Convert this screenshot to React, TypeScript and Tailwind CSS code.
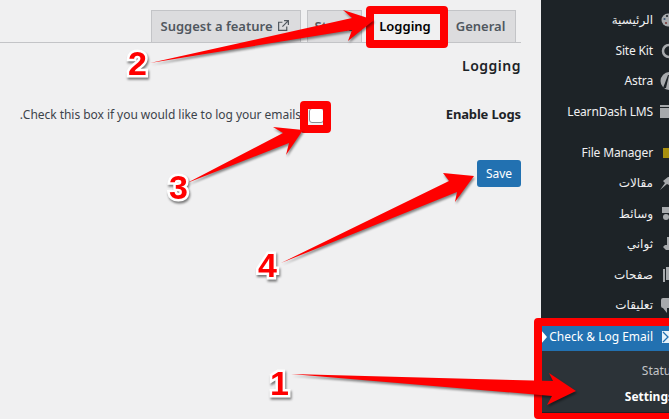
const font = "font-['Noto_Sans','DejaVu_Sans',sans-serif]"

const menu = [
  { label: 'الرئيسية', icon: <><circle cx="8" cy="10" r="6.5" fill="#a7aaad" /><circle cx="4.5" cy="9" r="1.1" fill="#3f5a78" /><circle cx="6" cy="13" r="1.1" fill="#7a3b3b" /><circle cx="7" cy="6" r="1.1" fill="#1d2327" /></> },
  { label: 'Site Kit', icon: <circle cx="9" cy="10" r="6" fill="none" stroke="#a7aaad" strokeWidth="2.5" /> },
  { label: 'Astra', icon: <><circle cx="9.5" cy="10" r="9" fill="#a7aaad" /><path d="M3 17 L8 4 L9 4 L6 17 Z" fill="#1d2327" /></> },
  { label: 'LearnDash LMS', icon: <><rect x="0" y="3" width="9" height="13" fill="#a7aaad" /><rect x="0" y="5" width="9" height="1" fill="#1d2327" /></> },
  { label: 'File Manager', icon: <path d="M3 5 H9 V15 H3 Z" fill="#a8900f" />, gap: true },
  { label: 'مقالات', icon: <path d="M0 17 L5 10 L3 8 L8 4 L9 4 L9 12 L7 11 Z" fill="#a7aaad" /> },
  { label: 'وسائط', icon: <><rect x="2" y="3" width="7" height="6" fill="#a7aaad" /><circle cx="6" cy="13" r="3" fill="#a7aaad" /></> },
  { label: 'ثواني', icon: <path d="M7 3 L9 3 L9 16 L6 16 L3 13 L5 11 L7 11 Z" fill="#a7aaad" /> },
  { label: 'صفحات', icon: <><rect x="3" y="4" width="2" height="13" fill="#a7aaad" /><rect x="6" y="2" width="3" height="13" fill="#a7aaad" /></> },
  { label: 'تعليقات', icon: <path d="M3 3 H9 V13 H7 V18 L3 13 Q1 13 1 11 V5 Q1 3 3 3 Z" fill="#a7aaad" /> },
]

function Sidebar() {
  return (
    <aside className="w-[128px] shrink-0 bg-[#1d2327] pt-[5px] h-full text-[#f0f0f1] text-[12px]">
      {menu.map(item => (
        <div key={item.label} className={`flex items-center gap-[7px] h-[30.5px] tracking-[-0.15px] ${item.gap ? 'mt-[10.5px]' : ''}`}>
          <svg width="9" height="20" viewBox="0 0 9 20" className="shrink-0">{item.icon}</svg>
          <span className="whitespace-nowrap">{item.label}</span>
        </div>
      ))}
      <div className="relative flex items-center gap-[7px] h-[26px] pb-[1px] bg-[#2271b1] text-white mt-[4px]">
        <svg width="9" height="20" viewBox="0 0 9 20" className="shrink-0">
          <rect x="2" y="4" width="10" height="12" fill="#e6f2fa" />
          <path d="M3 5 L8 10 L3 15" fill="none" stroke="#2271b1" strokeWidth="1.3" />
        </svg>
        <span className="whitespace-nowrap">Check &amp; Log Email</span>
        <span className="absolute left-0 top-[5px] border-y-[7px] border-y-transparent border-l-[6px] border-l-white" />
      </div>
      <div className="bg-[#2c3338] h-[61px] pt-[7px] whitespace-nowrap">
        <div className="h-[26px] flex items-center text-[#c3c4c7] mr-[-8px]">Status</div>
        <div className="h-[26px] flex items-center font-bold text-white mr-[-5px]">Settings</div>
      </div>
    </aside>
  )
}

function Tab({ children, className }: { children: React.ReactNode; className: string }) {
  return (
    <div className={`h-[32px] flex items-center justify-center bg-[#dcdcde] border border-b-0 border-[#c3c4c7] text-[#50575e] text-[13px] font-semibold whitespace-nowrap ${className}`}>
      {children}
    </div>
  )
}

export default function App() {
  return (
    <div dir="rtl" className={`relative flex w-[669px] h-[419px] overflow-hidden bg-[#f0f0f1] ${font}`}>
      <Sidebar />
      <main className="flex-1 ps-[20px] text-[#1d2327]">
        <nav className="flex items-end h-[43px] border-b border-[#c3c4c7] ps-[5px]">
          <Tab className="w-[71px]">General</Tab>
          <Tab className="w-[72px] ms-[4px] !bg-[#f0f0f1] !text-black">Logging</Tab>
          <Tab className="w-[55px] ms-[7px]">Status</Tab>
          <Tab className="w-[150px] ms-[6px] ps-[2px]">
            <svg width="13" height="13" viewBox="0 0 24 24" fill="none" stroke="#50575e" strokeWidth="2.2" className="mb-[2px]">
              <path d="M13 3h8v8M21 3 10 14M18 14v7H3V6h7" />
            </svg>
            <span dir="ltr" className="me-[4px]">Suggest a feature</span>
          </Tab>
        </nav>
        <h2 className="mt-[13px] h-[20px] leading-[20px] text-[14px] font-semibold tracking-[0.5px]">Logging</h2>
        <div className="flex items-center mt-[27px] h-[24px]">
          <div className="w-[197px] text-[13px] font-bold tracking-[-0.15px] shrink-0">Enable Logs</div>
          <input type="checkbox" className="appearance-none w-[15px] h-[15px] bg-white border border-[#8c8f94] rounded-[3px] shrink-0" />
          <span className="ms-[8px] text-[12px] text-[#3c434a] tracking-[-0.04px] whitespace-nowrap">Check this box if you would like to log your emails.</span>
        </div>
        <button className="block mt-[33px] w-[44px] h-[27px] rounded-[3px] bg-[#2271b1] text-white text-[12px]">Save</button>
      </main>

      {/* annotations */}
      <div className="absolute left-[366px] top-[6px] w-[82px] h-[42px] border-[8px] border-[#ff0000] rounded-[4px]" />
      <div className="absolute left-[300px] top-[101px] w-[31px] h-[32px] border-[8px] border-[#ff0000] rounded-[4px]" />
      <div className="absolute left-[534px] top-[318px] w-[150px] h-[101px] border-[8px] border-b-[6px] border-[#ff0000] rounded-[4px]" />
      <svg width="669" height="419" viewBox="0 0 669 419" className="absolute left-0 top-0 drop-shadow-[1px_2px_1px_rgba(0,0,0,0.45)]">
        <path d="M150 63 L352 18 L343 10 L374 20 L348 41 L352 30 Z" fill="#ff0000" />
        <path d="M187 183 L283 133 L273 127 L303 130 L286 155 L289 143 Z" fill="#ff0000" />
        <path d="M281 263 L449 181 L443 173 L474 176 L455 202 L457 192 Z" fill="#ff0000" />
        <path d="M291 374 L553 381 L549 373 L576 391 L547 405 L552 396 Z" fill="#ff0000" />
      </svg>
      {[
        { n: '1', c: 'left-[270px] top-[364px]' },
        { n: '2', c: 'left-[128px] top-[44px]' },
        { n: '3', c: 'left-[169px] top-[168px]' },
        { n: '4', c: 'left-[258px] top-[246px]' },
      ].map(d => (
        <span key={d.n} className={`absolute ${d.c} font-['Liberation_Sans',sans-serif] font-bold text-[34px] leading-[38px] text-[#ff0000] [-webkit-text-stroke:5px_white] [paint-order:stroke_fill] drop-shadow-[1px_2px_1px_rgba(0,0,0,0.5)]`}>{d.n}</span>
      ))}
    </div>
  )
}
